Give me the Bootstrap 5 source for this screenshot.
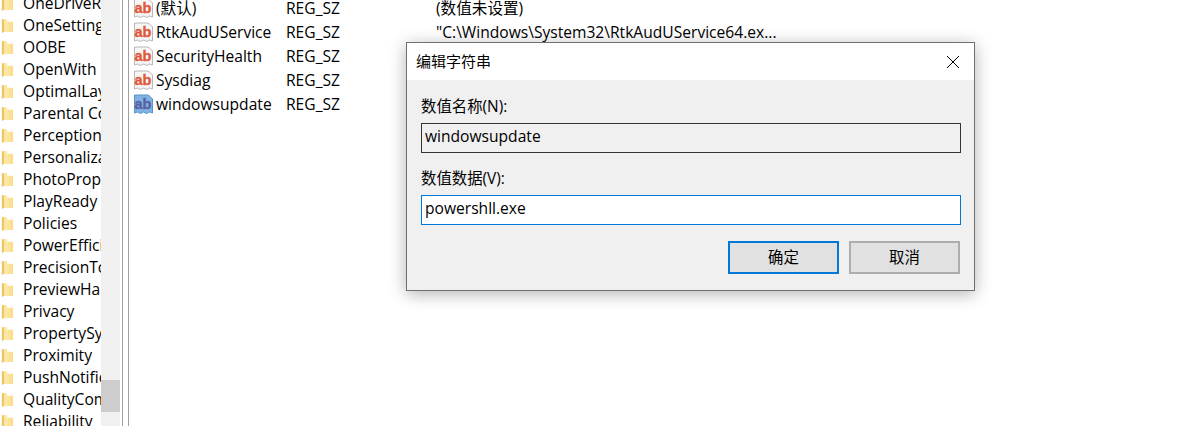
<!DOCTYPE html>
<html lang="zh-CN">
<head>
<meta charset="utf-8">
<title>编辑字符串</title>
<link href="https://cdn.jsdelivr.net/npm/bootstrap@5.3.0/dist/css/bootstrap.min.css" rel="stylesheet">
<style>
html,body{height:100%;overflow:hidden;background:#fff;}
body{font-family:"Open Sans","Noto Sans CJK SC",sans-serif;font-size:15.6px;color:#000;}
.app-shell{height:426px;position:relative;overflow:hidden;}
.tree-pane{width:101px;margin-top:-8px;flex:none;overflow:hidden;}
.tree-row{height:22px;line-height:22px;white-space:nowrap;gap:9px;}
.tree-row svg{flex:none;margin-left:1px;}
.scroll-track{width:19px;flex:none;background:#f0f0f0;position:relative;}
.scroll-thumb{position:absolute;left:0;right:0;top:380px;height:32px;background:#cdcdcd;}
.split-gap{flex:none;margin-left:2px;border-left:1px solid #a0a0a0;border-right:1px solid #a0a0a0;width:7px;margin-right:5px;}
.value-pane{margin-top:-4px;}
.value-row{height:24px;line-height:24px;white-space:nowrap;}
.value-row svg{flex:none;width:21px;margin-left:-1px;margin-right:2px;}
.col-name{width:130px;flex:none;}
.col-type{width:150px;flex:none;}
.edit-dialog{position:absolute;left:406px;top:42px;width:569px;height:249px;background:#f0f0f0;border:1px solid #707070;box-shadow:0 3px 16px rgba(0,0,0,.3);}
.dialog-title{height:37px;background:#fff;padding-left:9px;line-height:37px;font-size:15px;}
.dialog-close{width:14px;height:14px;margin-right:14px;}
.dialog-body{padding:17px 13px 0 14px;}
.field-label{height:18px;line-height:20px;font-size:15.4px;margin-bottom:8px;}
.field-box{height:30px;border-radius:0;padding:0 3px 4px;font-size:15.6px;line-height:24px;color:#000;font-family:inherit;box-shadow:none!important;}
.field-box:read-only{background:#f0f0f0;border:1px solid #333;}
.field-active,.field-active:focus{background:#fff;border:1px solid #0078d7;color:#000;}
.gap-a{margin-bottom:16px;}
.dlg-btn{width:111px;height:33px;border-radius:0;background:#e1e1e1;color:#000;font-size:15.4px;padding:0;line-height:1;}
.dlg-btn-main{border:2px solid #0078d7;}
.dlg-btn-alt{border:2px solid #adadad;}
.dlg-actions{margin-top:16px;gap:10px;padding-right:1px;}
</style>
</head>
<body>
<svg width="0" height="0" class="position-absolute">
<defs>
<linearGradient id="fg" x1="0" y1="0" x2="1" y2="0"><stop offset="0" stop-color="#f3cd6c"/><stop offset=".3" stop-color="#fce9ac"/><stop offset="1" stop-color="#fcdc85"/></linearGradient>
<symbol id="folder" viewBox="0 0 14 18"><path d="M1 2h5l1 3h6v11H3l-2 1z" fill="url(#fg)"/><path d="M1 2v15l2-2V4z" fill="#eec25c"/></symbol>
<symbol id="abred" viewBox="0 0 21 21"><path d="M1.500 1h14l4 4v14l-3-1-3 1.500-3-1.500-3 1.500-3-1.500-3 1z" fill="#f5f5f5" stroke="#b8b8b8"/><text x="10" y="14.500" text-anchor="middle" font-family="Liberation Sans" font-weight="700" font-size="14.500" fill="#e2583a" stroke="#e2583a" stroke-width=".35">ab</text></symbol>
<symbol id="abblue" viewBox="0 0 21 21"><path d="M1.500 1h14l4 4v14l-3-1-3 1.500-3-1.500-3 1.500-3-1.500-3 1z" fill="#7fb2e2" stroke="#5b93c8"/><text x="10" y="14.500" text-anchor="middle" font-family="Liberation Sans" font-weight="700" font-size="14.500" fill="#5a5f9f" stroke="#5a5f9f" stroke-width=".35">ab</text></symbol>
</defs>
</svg>
<div class="app-shell d-flex">
  <div class="tree-pane">
    <div class="tree-row d-flex align-items-center"><svg width="13" height="17"><use href="#folder"/></svg>OneDriveRamps</div>
    <div class="tree-row d-flex align-items-center"><svg width="13" height="17"><use href="#folder"/></svg>OneSettings</div>
    <div class="tree-row d-flex align-items-center"><svg width="13" height="17"><use href="#folder"/></svg>OOBE</div>
    <div class="tree-row d-flex align-items-center"><svg width="13" height="17"><use href="#folder"/></svg>OpenWith</div>
    <div class="tree-row d-flex align-items-center"><svg width="13" height="17"><use href="#folder"/></svg>OptimalLayout</div>
    <div class="tree-row d-flex align-items-center"><svg width="13" height="17"><use href="#folder"/></svg>Parental Controls</div>
    <div class="tree-row d-flex align-items-center"><svg width="13" height="17"><use href="#folder"/></svg>Perception</div>
    <div class="tree-row d-flex align-items-center"><svg width="13" height="17"><use href="#folder"/></svg>Personalization</div>
    <div class="tree-row d-flex align-items-center"><svg width="13" height="17"><use href="#folder"/></svg>PhotoProperty</div>
    <div class="tree-row d-flex align-items-center"><svg width="13" height="17"><use href="#folder"/></svg>PlayReady</div>
    <div class="tree-row d-flex align-items-center"><svg width="13" height="17"><use href="#folder"/></svg>Policies</div>
    <div class="tree-row d-flex align-items-center"><svg width="13" height="17"><use href="#folder"/></svg>PowerEfficiency</div>
    <div class="tree-row d-flex align-items-center"><svg width="13" height="17"><use href="#folder"/></svg>PrecisionTouch</div>
    <div class="tree-row d-flex align-items-center"><svg width="13" height="17"><use href="#folder"/></svg>PreviewHandlers</div>
    <div class="tree-row d-flex align-items-center"><svg width="13" height="17"><use href="#folder"/></svg>Privacy</div>
    <div class="tree-row d-flex align-items-center"><svg width="13" height="17"><use href="#folder"/></svg>PropertySystem</div>
    <div class="tree-row d-flex align-items-center"><svg width="13" height="17"><use href="#folder"/></svg>Proximity</div>
    <div class="tree-row d-flex align-items-center"><svg width="13" height="17"><use href="#folder"/></svg>PushNotifications</div>
    <div class="tree-row d-flex align-items-center"><svg width="13" height="17"><use href="#folder"/></svg>QualityCompat</div>
    <div class="tree-row d-flex align-items-center"><svg width="13" height="17"><use href="#folder"/></svg>Reliability</div>
  </div>
  <div class="scroll-track"><div class="scroll-thumb"></div></div>
  <div class="split-gap"></div>
  <div class="value-pane flex-grow-1">
    <div class="value-row d-flex align-items-center"><svg height="21"><use href="#abred"/></svg><span class="col-name">(默认)</span><span class="col-type">REG_SZ</span><span>(数值未设置)</span></div>
    <div class="value-row d-flex align-items-center"><svg height="21"><use href="#abred"/></svg><span class="col-name">RtkAudUService</span><span class="col-type">REG_SZ</span><span>"C:\Windows\System32\RtkAudUService64.ex...</span></div>
    <div class="value-row d-flex align-items-center"><svg height="21"><use href="#abred"/></svg><span class="col-name">SecurityHealth</span><span class="col-type">REG_SZ</span></div>
    <div class="value-row d-flex align-items-center"><svg height="21"><use href="#abred"/></svg><span class="col-name">Sysdiag</span><span class="col-type">REG_SZ</span></div>
    <div class="value-row d-flex align-items-center"><svg height="21"><use href="#abblue"/></svg><span class="col-name">windowsupdate</span><span class="col-type">REG_SZ</span></div>
  </div>
  <div class="edit-dialog">
    <div class="dialog-title d-flex justify-content-between align-items-center">
      <span>编辑字符串</span>
      <svg class="dialog-close" viewBox="0 0 14 14"><path d="M1 1l12 12M13 1L1 13" stroke="#000" stroke-width="1" fill="none"/></svg>
    </div>
    <div class="dialog-body">
      <div class="field-label">数值名称(N):</div>
      <input class="form-control field-box gap-a" readonly value="windowsupdate">
      <div class="field-label">数值数据(V):</div>
      <input class="form-control field-box field-active" value="powershll.exe">
      <div class="dlg-actions d-flex justify-content-end">
        <button class="btn dlg-btn dlg-btn-main" type="button">确定</button>
        <button class="btn dlg-btn dlg-btn-alt" type="button">取消</button>
      </div>
    </div>
  </div>
</div>
<script src="https://cdn.jsdelivr.net/npm/bootstrap@5.3.0/dist/js/bootstrap.bundle.min.js"></script>
</body>
</html>
